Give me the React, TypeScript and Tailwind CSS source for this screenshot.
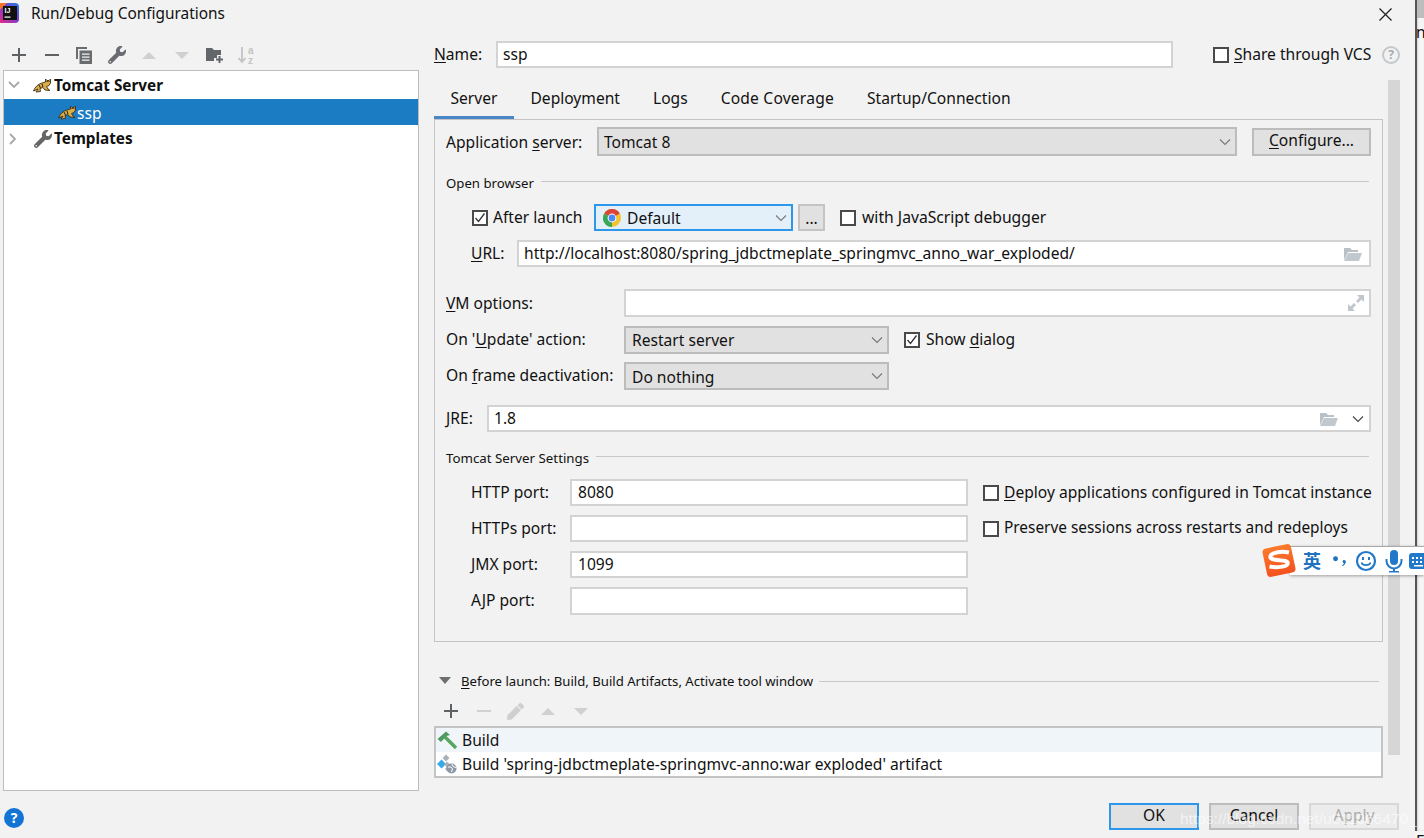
import React from "react";
import { FaWrench, FaPen } from "react-icons/fa";

const inputCls = "bg-white border-2 border-[#d3d3d3] flex items-center text-[15.6px] text-[#111]";
const selectCls = "bg-[#e1e1e1] border-2 border-[#bcbcbc] flex items-center text-[15.6px] text-[#111]";

const Chevron = ({ c = "#777" }: { c?: string }) => (
  <svg width="12" height="8" viewBox="0 0 12 8" fill="none" stroke={c} strokeWidth="1.1"><path d="M1 1.5l5 5 5-5" /></svg>
);

const Select = ({ w, pl, children }: { w: string; pl: string; children: React.ReactNode }) => (
  <div className={`${selectCls} ${w} ${pl} h-full justify-between pr-[4px]`}>
    <span>{children}</span>
    <Chevron />
  </div>
);

const Check = ({ on = false }: { on?: boolean }) => (
  <div className="w-[16px] h-[16px] shrink-0 bg-white border-2 border-[#4a4a4a] flex items-center justify-center">
    {on && (
      <svg width="12" height="12" viewBox="0 0 12 12" fill="none" stroke="#333" strokeWidth="1.3"><path d="M1.5 6l3 3.5 6-8" /></svg>
    )}
  </div>
);

const U = ({ children }: { children: React.ReactNode }) => <span className="underline underline-offset-2">{children}</span>;

/* label text sitting one pixel above its row's centre, as in the reference */
const T = ({ className = "", children }: { className?: string; children: React.ReactNode }) => (
  <span className={`mb-[2px] ${className}`}>{children}</span>
);

const Tri = ({ down = false, c = "#6e6e6e" }: { down?: boolean; c?: string }) => (
  <svg width="16" height="9" viewBox="0 0 16 9" fill={c}>
    {down ? <path d="M1 1h14L8 8z" /> : <path d="M8 1l7 7H1z" />}
  </svg>
);

const Plus = ({ c = "#5f6265" }: { c?: string }) => (
  <svg width="14" height="14" viewBox="0 0 14 14" fill={c}><path d="M6 0h2v6h6v2H8v6H6V8H0V6h6z" /></svg>
);
const Minus = ({ c = "#5f6265" }: { c?: string }) => (
  <svg width="14" height="14" viewBox="0 0 14 14" fill={c}><path d="M0 6h14v2H0z" /></svg>
);

const Folder = () => (
  <svg width="20" height="16" viewBox="0 0 20 16">
    <path d="M1 2h6l2 2h6v2H5L1 14z" fill="#b9c0c6" />
    <path d="M5 7h14l-3 8H1z" fill="#c2c9ce" />
  </svg>
);

const Tomcat = () => (
  <svg width="19" height="15" viewBox="0 0 19 15">
    <path d="M0.5 13 C2 9 5 6 9 5 L12.5 4 L12.5 1 L14 2.5 L16 2.5 L17.5 1 L17.5 5 L16 7.5 L13.5 8.5 L15 11 L17 12.5 L12 12 L10 9.5 L7 10.5 L7.5 13.5 L3 14 L5 11 z" fill="#dcae45" stroke="#3b3018" strokeWidth="0.9" />
    <path d="M6 7l1.5 3M9 6l1 3M13.5 3.5h1.2M15.5 3.5h1" stroke="#222" strokeWidth="1" />
  </svg>
);

const Chrome = () => (
  <svg width="18" height="18" viewBox="0 0 18 18">
    <circle cx="9" cy="9" r="9" fill="#f2c331" />
    <path d="M9 9L1.2 4.5A9 9 0 0 1 16.8 4.5z" fill="#db4437" />
    <path d="M9 9L1.2 4.5A9 9 0 0 0 9 18z" fill="#3aa757" />
    <circle cx="9" cy="9" r="4.4" fill="#fff" />
    <circle cx="9" cy="9" r="3.4" fill="#4a8af4" />
  </svg>
);

const Logo = () => (
  <svg width="20" height="20" viewBox="0 0 20 20">
    <defs>
      <linearGradient id="ij" x1="0" y1="1" x2="1" y2="0">
        <stop offset="0" stopColor="#f0267a" />
        <stop offset="0.55" stopColor="#7b3fd0" />
        <stop offset="1" stopColor="#1f7fe8" />
      </linearGradient>
    </defs>
    <rect x="-2" y="0" width="21" height="20" rx="4" fill="url(#ij)" />
    <path d="M-2 0h9L-2 9z" fill="#f5722a" />
    <rect x="3" y="3" width="14" height="14" fill="#111" />
    <text x="4.5" y="10" fontSize="7" fontWeight="700" fill="#fff" fontFamily="Liberation Sans, sans-serif">IJ</text>
    <rect x="4.5" y="13.5" width="6" height="1.2" fill="#fff" />
  </svg>
);

const Copy = () => (
  <svg width="16" height="17" viewBox="0 0 16 17" fill="#6a6d70">
    <path d="M0 0h11v2H2v10H0z" />
    <path d="M3.5 3.5H16V17H3.5z" />
    <path d="M6 6.5h7.5v1.2H6zM6 9.5h7.5v1.2H6zM6 12.5h7.5v1.2H6z" fill="#f2f2f2" />
  </svg>
);

const FolderPlus = () => (
  <svg width="18" height="16" viewBox="0 0 18 16" fill="#63666a">
    <path d="M0 1h6l2 2h7v5h-4v3H8v3H0z" />
    <path d="M12.5 9h2v2.5H17v2h-2.5V16h-2v-2.5H10v-2h2.5z" />
  </svg>
);

const Sort = () => (
  <svg width="20" height="20" viewBox="0 0 20 20">
    <path d="M5 2v15M1.5 13L5 17l3.5-4" fill="none" stroke="#c3c3c3" strokeWidth="1.8" />
    <text x="11" y="9" fontSize="10" fontWeight="700" fill="#c3c3c3" fontFamily="Liberation Sans, sans-serif">a</text>
    <text x="11" y="18.5" fontSize="10" fontWeight="700" fill="#c3c3c3" fontFamily="Liberation Sans, sans-serif">z</text>
  </svg>
);

const Hammer = () => (
  <svg width="20" height="19" viewBox="0 0 20 19" fill="none">
    <path d="M8 6l11 11" stroke="#57a65f" strokeWidth="3.4" />
    <path d="M0.5 8L9 0.5l4 3.5-3.5 1L4 11z" fill="#4f9a63" />
  </svg>
);

const Artifact = () => (
  <svg width="20" height="20" viewBox="0 0 20 20">
    <path d="M9 0.5l3.5 3.5L9 7.5 5.5 4z" fill="#a9b1ba" />
    <path d="M4.5 5.5L9 10l-4.5 4.5L0 10z" fill="#3aa9e8" />
    <path d="M10 7.5l3 3-3 3-3-3z" fill="#a9b1ba" />
    <path d="M8 15l2.5-2.5L13 15l-2.5 2.5z" fill="#a9b1ba" />
    <circle cx="14.5" cy="14.5" r="5" fill="#8c98a3" />
    <path d="M11 13h3l1.5 2-1 3M15 10l1 2.5 3 1" fill="none" stroke="#fff" strokeWidth="1" />
  </svg>
);

const Sogou = () => (
  <div className="absolute left-[1262px] top-[543px] w-[162px] h-[34px]">
    <div className="absolute left-[28px] top-[3px] right-0 h-[29px] bg-white border-t border-[#a8a8a8] shadow-[0_1px_3px_rgba(0,0,0,0.35)] flex items-center overflow-hidden">
      <span className="ml-[13px] text-[18px] font-bold text-[#1f72bf] leading-none shrink-0">英</span>
      <svg className="ml-[9px] shrink-0" width="20" height="16" viewBox="0 0 18 14" fill="#1f72bf">
        <circle cx="5" cy="5" r="2.2" />
        <path d="M12.5 6c1.5 0 2.2 1 1.6 2.6-.5 1.3-1.4 2.4-2.8 3.1l-.4-.6c1-.7 1.5-1.4 1.6-2.2-1.6-.3-1.3-2.9 0-2.9z" />
      </svg>
      <svg className="ml-[5px] shrink-0" width="22" height="22" viewBox="0 0 22 22" fill="none" stroke="#2379c9" strokeWidth="2.2">
        <circle cx="11" cy="11" r="9" />
        <path d="M6.5 12.5c1 3.5 8 3.5 9 0" strokeWidth="1.6" />
        <path d="M8 7v3M14 7v3" strokeWidth="2" />
      </svg>
      <svg className="ml-[8px] shrink-0" width="18" height="24" viewBox="0 0 18 24" fill="#2379c9">
        <rect x="5" y="1" width="8" height="15" rx="4" />
        <path d="M1.5 10v2a7.5 7.5 0 0 0 15 0v-2" fill="none" stroke="#2379c9" strokeWidth="2" />
        <path d="M8 19h2v3h4v1.5H4V22h4z" />
      </svg>
      <svg className="ml-[6px] shrink-0" width="18" height="18" viewBox="0 0 18 18">
        <rect x="0" y="1" width="18" height="16" rx="3" fill="#2379c9" />
        <path d="M3 5h2v2H3zM7 5h2v2H7zM11 5h2v2h-2zM15 5h2v2h-2zM3 9h2v2H3zM7 9h2v2H7zM11 9h2v2h-2zM15 9h2v2h-2zM5 13h9v1.5H5z" fill="#fff" />
      </svg>
    </div>
    <svg className="absolute left-0 top-0" width="36" height="35" viewBox="0 0 36 35">
      <defs>
        <linearGradient id="sg" x1="0" y1="0" x2="0" y2="1">
          <stop offset="0" stopColor="#fb7a2c" />
          <stop offset="1" stopColor="#f4511e" />
        </linearGradient>
      </defs>
      <rect x="2.5" y="3" width="29" height="29" rx="4" fill="url(#sg)" transform="rotate(-12 17 17.5)" />
      <path d="M27 9.5C20 8 10 9 8.5 13c-1 3 3.5 4 9 4.2 5 .2 9 1.2 8 3.8-1.2 3-11 3.8-18 2.5" fill="none" stroke="#fff" strokeWidth="4" />
    </svg>
  </div>
);

const Field = ({ label, value }: { label: React.ReactNode; value?: string }) => (
  <>
    <T className="w-[99px] shrink-0">{label}</T>
    <div className={`${inputCls} pl-[6px] w-[398px] shrink-0 h-full`}><T>{value}</T></div>
  </>
);

export default function App() {
  return (
    <div
      className="relative w-[1424px] h-[838px] overflow-hidden flex bg-[#f2f2f2] text-[15.6px] leading-[20px] text-[#111]"
      style={{ fontFamily: '"Noto Sans", "Noto Sans CJK SC", sans-serif' }}
    >
      <div className="w-[1415px] h-[831px] shrink-0 flex flex-col bg-[#f2f2f2]">
        {/* title bar */}
        <div className="h-[28px] flex items-center shrink-0">
          <div className="w-[31px] pb-[3px]"><Logo /></div>
          <span className="text-[15.4px] mb-[1px]">Run/Debug Configurations</span>
          <svg className="ml-auto mr-[23px]" width="13" height="13" viewBox="0 0 13 13" stroke="#222" strokeWidth="1.3"><path d="M.5.5l12 12M12.5.5l-12 12" /></svg>
        </div>

        <div className="flex-1 flex">
          {/* left column */}
          <div className="w-[434px] shrink-0 pl-[3px] flex flex-col">
            <div className="h-[42px] flex items-center pt-[12px] [&>div]:w-[32.6px] [&>div]:flex [&>div]:justify-center [&>div]:items-center">
              <div><Plus /></div>
              <div><Minus /></div>
              <div><Copy /></div>
              <div><FaWrench size={18} color="#696c70" /></div>
              <div className="pr-[2px]"><Tri c="#d0d0d0" /></div>
              <div><Tri down c="#d0d0d0" /></div>
              <div><FolderPlus /></div>
              <div><Sort /></div>
            </div>
            <div className="w-[416px] h-[721px] bg-white border border-[#bdbdbd] flex flex-col font-bold text-[15.3px]">
              <div className="h-[28px] flex items-center">
                <svg className="ml-[4px]" width="12" height="8" viewBox="0 0 12 8" fill="none" stroke="#a8a8a8" strokeWidth="1.8"><path d="M1 1l5 5 5-5" /></svg>
                <span className="ml-[13px]"><Tomcat /></span>
                <span className="ml-[2px]">Tomcat Server</span>
              </div>
              <div className="h-[26px] flex items-center bg-[#1b7bc3] text-white font-normal text-[15.6px]">
                <span className="ml-[54px]"><Tomcat /></span>
                <span className="mt-[2px]">ssp</span>
              </div>
              <div className="h-[27px] flex items-center">
                <svg className="ml-[5px]" width="8" height="12" viewBox="0 0 8 12" fill="none" stroke="#a8a8a8" strokeWidth="1.8"><path d="M1 1l5 5-5 5" /></svg>
                <span className="ml-[17px]"><FaWrench size={18} color="#666" /></span>
                <T className="ml-[2px]">Templates</T>
              </div>
            </div>
            <div className="ml-[1px] mt-[17px] w-[20px] h-[20px] rounded-full bg-[#1474d4] text-white text-[14px] font-bold flex items-center justify-center">?</div>
          </div>

          {/* right column */}
          <div className="flex-1 flex flex-col">
            <div className="mt-[13px] h-[27px] flex items-center shrink-0 pr-[15px]">
              <T className="w-[62px]"><U>N</U>ame:</T>
              <div className={`${inputCls} pl-[5px] w-[677px] h-full`}><T>ssp</T></div>
              <div className="ml-[40px]"><Check /></div>
              <T className="ml-[5px]"><U>S</U>hare through VCS</T>
              <div className="ml-auto w-[18px] h-[18px] rounded-full border-2 border-[#c2c8cc] text-[#a5abb0] text-[12px] font-bold flex items-center justify-center">?</div>
            </div>

            <div className="mt-[12px] flex shrink-0">
              <div className="w-[949px] flex flex-col">
                {/* tabs */}
                <div className="h-[39px] flex">
                  {["Server", "Deployment", "Logs", "Code Coverage", "Startup/Connection"].map((t, i) => (
                    <div key={t} className={`px-[16.5px] pt-[8px] ${i === 0 ? "border-b-[3px] border-[#4a86c8]" : ""} ${i === 3 ? "tracking-[0.2px]" : ""}`}>{t}</div>
                  ))}
                </div>
                {/* panel */}
                <div className="h-[523px] border border-[#c4c4c4] px-[11px] flex flex-col">
                  <div className="mt-[7px] h-[29px] flex items-center">
                    <span className="w-[151px]">Application <U>s</U>erver:</span>
                    <Select w="w-[640px]" pl="pl-[5px]">Tomcat 8</Select>
                    <div className="ml-[15px] w-[119px] h-[28px] bg-[#e1e1e1] border-2 border-[#bcbcbc] flex items-center justify-center"><span className="mb-[4px]"><U>C</U>onfigure...</span></div>
                  </div>
                  <div className="mt-[17px] h-[20px] flex items-center text-[13.2px] pr-[2px]">
                    <span>Open browser</span>
                    <div className="ml-[7px] flex-1 h-px bg-[#c8c8c8] mb-[3px]" />
                  </div>
                  <div className="mt-[11px] h-[27px] flex items-center pl-[26px]">
                    <Check on />
                    <T className="ml-[5px] w-[101px]">After launch</T>
                    <div className="w-[199px] h-full bg-[#e3f0fa] border-2 border-[#2f97ea] flex items-center pl-[7px] pr-[4px]">
                      <Chrome />
                      <span className="ml-[6px]">Default</span>
                      <span className="ml-auto"><Chevron /></span>
                    </div>
                    <div className="ml-[5px] w-[27px] h-full bg-[#e1e1e1] border-2 border-[#c4c4c4] flex items-center justify-center">...</div>
                    <div className="ml-[15px]"><Check /></div>
                    <T className="ml-[6px] text-[15.7px]">with <U>J</U>avaScript debugger</T>
                  </div>
                  <div className="mt-[9px] h-[27px] flex items-center pl-[25px]">
                    <T className="w-[46px]"><U>U</U>RL:</T>
                    <div className={`${inputCls} pl-[5px] flex-1 h-full justify-between pr-[6px]`}>
                      <T>http://localhost:8080/spring_jdbctmeplate_springmvc_anno_war_exploded/</T>
                      <Folder />
                    </div>
                  </div>
                  <div className="mt-[22px] h-[28px] flex items-center">
                    <span className="w-[178px]"><U>V</U>M options:</span>
                    <div className={`${inputCls} flex-1 h-full justify-end pr-[5px]`}>
                      <svg width="16" height="16" viewBox="0 0 16 16" fill="#c0c6cb">
                        <path d="M9 0h7v7l-2.5-2.5L10 8 8 6l3.5-3.5zM0 9l2.5 2.5L6 8l2 2-3.5 3.5L7 16H0z" />
                      </svg>
                    </div>
                  </div>
                  <div className="mt-[9px] h-[28px] flex items-center">
                    <T className="w-[178px]">On '<U>U</U>pdate' action:</T>
                    <Select w="w-[265px]" pl="pl-[6px]">Restart server</Select>
                    <div className="ml-[15px]"><Check on /></div>
                    <T className="ml-[6px]">Show <U>d</U>ialog</T>
                  </div>
                  <div className="mt-[8px] h-[28px] flex items-center">
                    <T className="w-[178px]">On <U>f</U>rame deactivation:</T>
                    <Select w="w-[265px]" pl="pl-[6px]"><span className="relative top-px">Do nothing</span></Select>
                  </div>
                  <div className="mt-[15px] h-[27px] flex items-center">
                    <T className="w-[41px]"><U>J</U>RE:</T>
                    <div className={`${inputCls} pl-[5px] flex-1 h-full pr-[5px]`}>
                      <T>1.8</T>
                      <span className="ml-auto"><Folder /></span>
                      <span className="ml-[13px]"><Chevron c="#444" /></span>
                    </div>
                  </div>
                  <div className="mt-[16px] h-[20px] flex items-center text-[13.3px] pr-[2px]">
                    <span>Tomcat Server Settings</span>
                    <div className="ml-[7px] flex-1 h-px bg-[#c8c8c8] mb-[3px]" />
                  </div>
                  <div className="mt-[11px] h-[27px] flex items-center pl-[25px]">
                    <Field label="HTTP port:" value="8080" />
                    <div className="ml-[15px]"><Check /></div>
                    <T className="ml-[5px] whitespace-nowrap"><U>D</U>eploy applications configured in Tomcat instance</T>
                  </div>
                  <div className="mt-[9px] h-[27px] flex items-center pl-[25px]">
                    <Field label="HTTPs port:" />
                    <div className="ml-[15px]"><Check /></div>
                    <T className="ml-[5px] whitespace-nowrap text-[15.4px]">Preserve sessions across restarts and redeploys</T>
                  </div>
                  <div className="mt-[9px] h-[27px] flex items-center pl-[25px]">
                    <Field label="JMX port:" value="1099" />
                  </div>
                  <div className="mt-[9px] h-[28px] flex items-center pl-[25px]">
                    <Field label="AJP port:" />
                  </div>
                </div>

                {/* before launch */}
                <div className="mt-[29px] h-[20px] flex items-center text-[13.15px] pl-[5px] pr-[4px]">
                  <svg width="12" height="8" viewBox="0 0 12 8" fill="#6e6e6e"><path d="M0 0h12L6 7z" /></svg>
                  <span className="ml-[10px]"><U>B</U>efore launch: Build, Build Artifacts, Activate tool window</span>
                  <div className="ml-[6px] flex-1 h-px bg-[#c8c8c8]" />
                </div>
                <div className="mt-[8px] h-[24px] flex items-center pl-[1px] [&>div]:w-[32.4px] [&>div]:flex [&>div]:justify-center [&>div]:items-center">
                  <div><Plus /></div>
                  <div><Minus c="#d0d0d0" /></div>
                  <div><FaPen size={17} color="#cfcfcf" /></div>
                  <div><Tri c="#d0d0d0" /></div>
                  <div><Tri down c="#d0d0d0" /></div>
                </div>
                <div className="mt-[3px] h-[52px] border-2 border-[#c4c4c4] bg-white flex flex-col">
                  <div className="h-[24px] bg-[#f0f5fa] flex items-center pl-[1px]">
                    <Hammer />
                    <span className="ml-[5px]">Build</span>
                  </div>
                  <div className="h-[24px] flex items-center pl-[1px]">
                    <Artifact />
                    <span className="ml-[5px]">Build 'spring-jdbctmeplate-springmvc-anno:war exploded' artifact</span>
                  </div>
                </div>
              </div>
              {/* scrollbar */}
              <div className="ml-[5px] w-[12px] h-[675px] bg-[#d6d6d6]" />
            </div>

            <div className="mt-[25px] flex gap-[10px] justify-end pr-[16px]">
              <div className="w-[90px] h-[27px] bg-[#e1e1e1] border-2 border-[#2f97ea] flex items-center justify-center"><span className="mb-[4px]">OK</span></div>
              <div className="w-[90px] h-[27px] bg-[#e1e1e1] border-2 border-[#bcbcbc] flex items-center justify-center"><span className="mb-[4px]">Cancel</span></div>
              <div className="w-[90px] h-[27px] bg-[#ececec] border-2 border-[#d8d8d8] flex items-center justify-center text-[#aaa]"><span className="mb-[4px]">Apply</span></div>
            </div>
          </div>
        </div>
      </div>

      {/* background window at right */}
      <div className="flex-1 h-full bg-[#f6f6f6] flex flex-col overflow-hidden">
        <div className="h-[831px] shrink-0 border-l-2 border-[#555] shadow-[inset_1px_0_2px_rgba(0,0,0,0.15)] flex flex-col">
          <div className="h-[18px] bg-[#bdbdbd] shrink-0" />
          <span className="mt-[4px] leading-[20px] -ml-[1px]">n</span>
        </div>
        <span className="leading-[20px] text-[15.6px] pl-[1px]">E</span>
      </div>

      <Sogou />
      <div
        className="absolute left-[1180px] top-[807px] text-[15.5px] leading-[24px] whitespace-nowrap text-white/60"
        style={{ fontFamily: '"Liberation Sans", sans-serif' }}
      >
        https://blog.csdn.net/u011066470_
      </div>
    </div>
  );
}
